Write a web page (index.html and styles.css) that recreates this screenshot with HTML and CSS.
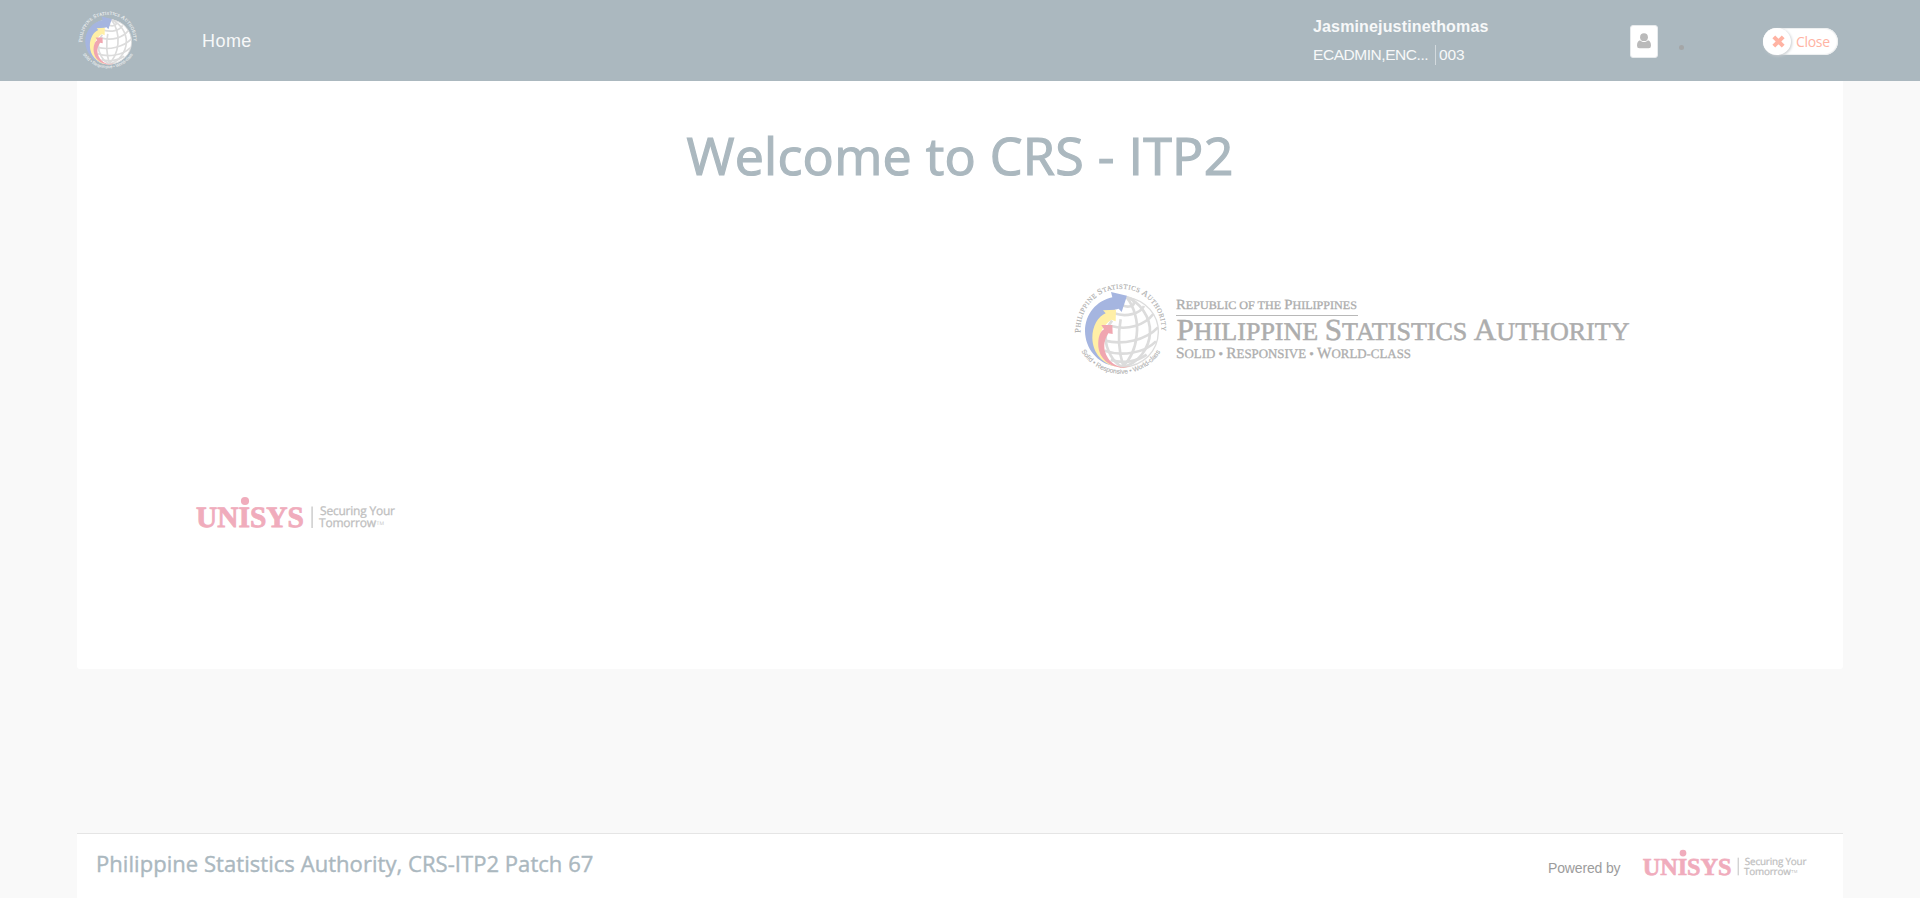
FILE: index.html
```html
<!DOCTYPE html>
<html lang="en">
<head>
<meta charset="utf-8">
<title>CRS - ITP2</title>
<link rel="stylesheet" href="styles.css">
</head>
<body>
<svg class="defs" width="0" height="0">
  <symbol id="seal" viewBox="0 0 294 294" overflow="visible">
    <path id="ring-top" d="M25.4,158 A122,122 0 1 1 268.6,158" fill="none"/>
    <path id="ring-bottom" d="M28,214 A139,139 0 0 0 266,214" fill="none"/>
    <circle cx="151" cy="156" r="107" fill="#fff"/>
    <g class="globe-lines">
      <path d="M166,52 C222,60 260,106 259,156 C258,212 216,258 150,262" stroke-width="4"/>
      <path d="M164,52 C204,66 236,112 234,158 C232,204 200,250 152,261"/>
      <path d="M164,52 C184,76 200,122 194,166 C190,206 174,240 150,261"/>
      <path d="M120,122 C98,150 94,186 116,226 C126,244 138,254 150,261"/>
      <path d="M146,118 C138,160 140,214 154,260"/>
      <path d="M152,76 C168,84 188,78 186,66 C182,56 174,54 164,53"/>
      <path d="M126,100 C162,112 204,102 216,78"/>
      <path d="M118,138 C166,152 218,136 244,102"/>
      <path d="M98,182 C154,196 222,180 258,142"/>
      <path d="M98,212 C148,230 216,220 252,184"/>
      <path d="M116,240 C154,252 196,244 224,224"/>
    </g>
    <path fill="#a5b5e0" d="M165,47 L149,96 L140,86 C92,96 64,132 66,176 C68,214 92,246 128,259 C76,250 40,206 39,154 C39,102 74,62 121,52 L117,36 Z"/>
    <path fill="#ffefa6" d="M132,89 L131,124 L118,119 C88,140 76,170 84,202 C90,230 110,250 134,261 C92,252 62,220 61,174 C61,138 78,110 101,100 L93,91 Z"/>
    <path fill="#f0a6b0" d="M121,135 L122,162 L109,160 C94,184 92,208 108,234 C118,250 134,258 152,263 C110,260 82,234 79,200 C77,174 84,154 96,148 L88,135 Z"/>
    <path fill="#f3aca8" d="M128,258 Q150,264 176,259 Q152,268 128,258Z"/>
    <text class="ring-caps"><textPath href="#ring-top" textLength="398"><tspan class="ring-big">P</tspan>HILIPPINE <tspan class="ring-big">S</tspan>TATISTICS <tspan class="ring-big">A</tspan>UTHORITY</textPath></text>
    <text class="ring-motto"><textPath href="#ring-bottom" textLength="284">Solid • Responsive • World-class</textPath></text>
  </symbol>
  <symbol id="unisys" viewBox="0 0 200 34" overflow="visible">
    <text class="unisys-word" x="0" y="31" textLength="108" lengthAdjust="spacingAndGlyphs">UNISYS</text>
    <circle cx="49" cy="5" r="4.1" fill="#f0acbc"/>
    <rect x="115.3" y="10.5" width="1.6" height="21.5" fill="#d0d0d0"/>
    <text class="unisys-tag" x="124" y="19.3" textLength="75">Securing Your</text>
    <text class="unisys-tag" x="123" y="31" textLength="57">Tomorrow</text>
    <text class="unisys-tm" x="180.5" y="29" textLength="7.5">TM</text>
  </symbol>
</svg>

<header class="topbar">
  <svg class="topbar-seal"><use href="#seal"/></svg>
  <a class="nav-home">Home</a>
  <div class="account">
    <div class="account-name">Jasminejustinethomas</div>
    <div class="account-meta"><span class="roles">ECADMIN,ENC...</span><span class="code">003</span></div>
  </div>
  <div class="user-button">
    <svg width="14" height="16" viewBox="0 0 14 16"><circle cx="7" cy="4.2" r="3.9"/><path d="M3,7.2 C4,8.4 5.4,9 7,9 C8.6,9 10,8.4 11,7.2 C13.2,7.6 14,10 14,12.8 Q14,15.3 11.6,15.3 H2.4 Q0,15.3 0,12.8 C0,10 .8,7.6 3,7.2Z"/></svg>
  </div>
  <span class="dot"></span>
  <div class="close-button">
    <span class="close-knob"><svg width="13" height="13" viewBox="0 0 13 13"><path d="M1.8,1.8 L11.2,11.2 M11.2,1.8 L1.8,11.2"/></svg></span>
    <span class="close-label">Close</span>
  </div>
</header>

<main class="panel">
  <h1 class="welcome">Welcome to CRS - ITP2</h1>
  <svg class="psa-logo" width="560" height="98" viewBox="0 0 560 98">
    <use href="#seal" width="98" height="98"/>
    <text class="psa-text psa-country" x="104" y="29.3" textLength="181" lengthAdjust="spacingAndGlyphs"><tspan class="cap">R</tspan>EPUBLIC OF THE <tspan class="cap">P</tspan>HILIPPINES</text>
    <rect x="104" y="35" width="182" height="1" fill="#b8b8b8"/>
    <text class="psa-text psa-name" x="104.5" y="60.3" textLength="453" lengthAdjust="spacingAndGlyphs"><tspan class="cap">P</tspan>HILIPPINE <tspan class="cap">S</tspan>TATISTICS <tspan class="cap">A</tspan>UTHORITY</text>
    <text class="psa-text psa-motto" x="104" y="78" textLength="235" lengthAdjust="spacingAndGlyphs"><tspan class="cap">S</tspan>OLID • <tspan class="cap">R</tspan>ESPONSIVE • <tspan class="cap">W</tspan>ORLD-CLASS</text>
  </svg>
  <svg class="unisys-main" width="200" height="34"><use href="#unisys"/></svg>
</main>

<footer class="footer">
  <div class="footer-title">Philippine Statistics Authority, CRS-ITP2 Patch 67</div>
  <div class="powered">Powered by</div>
  <svg class="unisys-small" width="166" height="28"><use href="#unisys"/></svg>
</footer>
</body>
</html>
```
FILE: styles.css
```css
* { box-sizing: border-box; }
body {
  margin: 0;
  height: 898px;
  display: flex;
  flex-direction: column;
  overflow: hidden;
  background: #f9f9f9;
  font-family: "Liberation Sans", Arial, sans-serif;
}
svg { display: block; flex: none; overflow: visible; }
svg text { text-rendering: geometricPrecision; }
.defs { position: absolute; }

.topbar {
  height: 81px;
  flex: none;
  display: flex;
  align-items: flex-start;
  background: #abb8bf;
  color: #f7f8f9;
  padding-left: 77px;
}
.topbar-seal { width: 62px; height: 62px; margin-top: 9px; --ring: #eceff0; }
.nav-home { margin: 31px 0 0 63px; width: 50px; font-size: 18px; line-height: 21px; letter-spacing: 0.45px; }
.account { margin: 17px 0 0 1061px; width: 317px; }
.account-name { font-size: 16px; font-weight: bold; line-height: 19px; letter-spacing: 0.15px; }
.account-meta { display: flex; margin-top: 9px; font-size: 15.5px; line-height: 20px; }
.roles { width: 123px; border-right: 1px solid #d3dade; letter-spacing: -0.45px; }
.code { padding-left: 3px; letter-spacing: -0.1px; }
.user-button {
  width: 28px;
  height: 33px;
  margin-top: 25px;
  padding: 8px 0 0 7px;
  background: #fff;
  border: 1px solid #e8ebed;
  border-radius: 3px;
}
.user-button svg { margin: -1px; fill: #bababa; }
.dot { width: 5px; height: 5px; margin: 45px 0 0 21px; border-radius: 50%; background: #a4a6a7; }
.close-button {
  display: flex;
  align-items: center;
  width: 75px;
  height: 27px;
  margin: 28px 0 0 79px;
  border-radius: 14px;
  background: #fff;
  box-shadow: inset 0 0 1px 1px #eceeef;
}
.close-knob {
  display: flex;
  align-items: center;
  justify-content: center;
  width: 28px;
  height: 27px;
  padding-left: 3px;
  border-radius: 50%;
  background: #fff;
  box-shadow: 1px 1px 3px #c9cdd0;
}
.close-knob path { stroke: #ffb3a3; stroke-width: 4; fill: none; }
.close-label { margin-left: 5px; color: #ffb3a3; font: 14px/20px "Open Sans", sans-serif; letter-spacing: -0.3px; }

.panel {
  width: 1766px;
  height: 588px;
  flex: none;
  margin-left: 77px;
  background: #fff;
  border-radius: 0 0 3px 3px;
}
.welcome {
  margin: 0;
  padding-top: 39px;
  height: 110px;
  text-align: center;
  color: #abb8bf;
  font: 500 52px/70px "Open Sans", sans-serif;
  letter-spacing: 0.25px;
  -webkit-text-stroke: 1.2px #abb8bf;
}
.psa-logo { margin: 89px 0 0 995px; --ring: #b0b0b0; }
.unisys-main { margin: 118px 0 0 119px; }

.globe-lines { fill: none; stroke: #dcdcdc; stroke-width: 8; }
.ring-caps { font: 20px "Liberation Serif", serif; fill: var(--ring); stroke: var(--ring); stroke-width: .5px; }
.ring-big { font-size: 25px; }
.ring-motto { font: 20px "Liberation Sans", sans-serif; fill: var(--ring); stroke: var(--ring); stroke-width: .3px; }
.psa-text { font-family: "Liberation Serif", serif; fill: #adadad; stroke: #adadad; stroke-width: .3px; }
.psa-country { font-size: 11.5px; }
.psa-country .cap { font-size: 14px; }
.psa-name { font-size: 25.5px; stroke-width: .5px; }
.psa-name .cap { font-size: 30.5px; }
.psa-motto { font-size: 13px; }
.psa-motto .cap { font-size: 15.5px; }
.unisys-word { font: bold 29.5px "Liberation Serif", serif; fill: #f0acbc; stroke: #f0acbc; stroke-width: .8px; }
.unisys-tag { font: 12px "Open Sans", sans-serif; fill: #c0c0c0; stroke: #c0c0c0; stroke-width: .3px; }
.unisys-tm { font: 5px "Open Sans", sans-serif; fill: #c0c0c0; }

.footer {
  width: 1766px;
  height: 65px;
  flex: none;
  display: flex;
  align-items: flex-start;
  margin: 164px 0 0 77px;
  padding-left: 19px;
  background: #fff;
  border-top: 1px solid #e5e5e5;
}
.footer-title {
  width: 1452px;
  padding-top: 14px;
  color: #abb8bf;
  font: 500 22px/30px "Open Sans", sans-serif;
  letter-spacing: 0.05px;
  -webkit-text-stroke: 0.4px #abb8bf;
}
.powered { width: 94px; padding-top: 26px; color: #9c9c9c; font-size: 14px; line-height: 17px; letter-spacing: -0.15px; }
.unisys-small { margin-top: 15px; }
```
